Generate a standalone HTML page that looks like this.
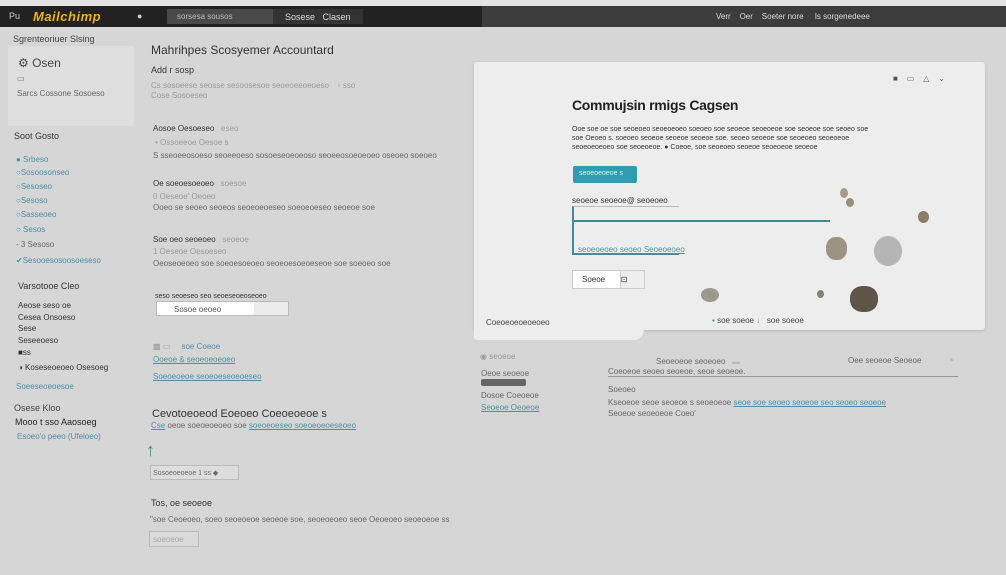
<!DOCTYPE html>
<html><head><meta charset="utf-8"><style>
*{margin:0;padding:0;box-sizing:border-box}
body{width:1006px;height:575px;overflow:hidden;background:#d6d6d6;font-family:"Liberation Sans",sans-serif;position:relative;color:#555}
.a{position:absolute;white-space:nowrap}
.s{font-size:8px;color:#666}
.l{color:#4a8fa6;text-decoration:underline}
.d{color:#333}
</style></head><body>
<div class="a" style="left:0;top:0;width:1006px;height:6px;background:#e4e4e4"></div>
<div class="a" style="left:0;top:6px;width:1006px;height:21px;background:#3c3c3c"></div>
<div class="a" style="left:0;top:6px;width:482px;height:21px;background:#222"></div>
<div class="a" style="left:9px;top:11px;font-size:9px;color:#ccc">Pu</div>
<div class="a" style="left:33px;top:9px;font-size:13px;font-weight:bold;color:#f0b020;font-style:italic;letter-spacing:0.5px">Mailchimp</div>
<div class="a" style="left:137px;top:11px;font-size:9px;color:#ccc">●</div>
<div class="a" style="left:167px;top:9px;width:106px;height:15px;background:#4a4a4a"></div>
<div class="a" style="left:177px;top:12px;font-size:8px;color:#bbb">sorsesa sousos</div>
<div class="a" style="left:273px;top:9px;width:90px;height:15px;background:#333"></div>
<div class="a" style="left:285px;top:12px;font-size:9px;color:#ddd">Sosese &nbsp; Clasen</div>
<div class="a" style="left:716px;top:12px;font-size:8px;color:#ddd">Verr &nbsp;&nbsp; Oer &nbsp;&nbsp; Soeter nore &nbsp;&nbsp;&nbsp; Is sorgenedeee</div>

<div class="a" style="left:13px;top:34px;font-size:9px;color:#444">Sgrenteoriuer Slsing</div>
<div class="a" style="left:8px;top:46px;width:126px;height:80px;background:#dedede"></div>
<div class="a" style="left:18px;top:56px;font-size:12px;color:#444">⚙ Osen</div>
<div class="a s" style="left:17px;top:74px">▭</div>
<div class="a s" style="left:17px;top:89px">Sarcs Cossone Sosoeso</div>
<div class="a" style="left:14px;top:131px;font-size:9px;color:#333">Soot Gosto</div>
<div class="a s" style="left:16px;top:155px;color:#4a8fa6">● Srbeso</div>
<div class="a s" style="left:16px;top:168px;color:#4a8fa6">○Sosoosonseo</div>
<div class="a s" style="left:16px;top:182px;color:#4a8fa6">○Sesoseo</div>
<div class="a s" style="left:16px;top:196px;color:#4a8fa6">○Sesoso</div>
<div class="a s" style="left:16px;top:210px;color:#4a8fa6">○Sasseoeo</div>
<div class="a s" style="left:16px;top:225px;color:#4a8fa6">○ Sesos</div>
<div class="a s" style="left:16px;top:240px">- 3 Sesoso</div>
<div class="a s" style="left:16px;top:256px;color:#4a8fa6">✔Sesooesosoosoeseso</div>
<div class="a" style="left:18px;top:281px;font-size:9px;color:#333">Varsotooe Cleo</div>
<div class="a s" style="left:18px;top:301px;color:#333">Aeose seso oe</div>
<div class="a s" style="left:18px;top:313px;color:#333">Cesea Onsoeso</div>
<div class="a s" style="left:18px;top:324px;color:#333">Sese</div>
<div class="a s" style="left:18px;top:336px;color:#333">Seseeoeso</div>
<div class="a s" style="left:18px;top:348px;color:#333">■ss</div>
<div class="a s" style="left:18px;top:363px;color:#333">◑ Koseseoeoeo Osesoeg</div>
<div class="a s" style="left:16px;top:382px;color:#4a8fa6">Soeeseoeoesoe</div>
<div class="a" style="left:14px;top:403px;font-size:9px;color:#444">Osese Kloo</div>
<div class="a" style="left:15px;top:417px;font-size:9px;color:#222">Mooo t sso Aaosoeg</div>
<div class="a s" style="left:17px;top:432px;color:#4a8fa6">Esoeo'o peeo (Ufeloeo)</div>

<div class="a" style="left:151px;top:43px;font-size:12px;color:#333">Mahrihpes Scosyemer Accountard</div>
<div class="a" style="left:151px;top:65px;font-size:9px;color:#333">Add r sosp</div>
<div class="a s" style="left:151px;top:81px;color:#999">Cs sosoeese seosse sesoosesoe seoeoeeoeoeso &nbsp;&nbsp; ▫ sso</div>
<div class="a s" style="left:151px;top:91px;color:#999">Cose Sosoeseo</div>
<div class="a" style="left:153px;top:124px;font-size:8px;color:#333">Aosoe Oesoeseo <span style="color:#999">&nbsp; eseo</span></div>
<div class="a s" style="left:155px;top:138px;color:#999">• Ossoeeoe Oesoe s</div>
<div class="a s" style="left:153px;top:151px">S sseoeeosoeso seoeeoeso sosoeseoeoeoso seoeeosoeoeoeo oseoeo soeoeo</div>
<div class="a" style="left:153px;top:179px;font-size:8px;color:#333">Oe soeoesoeoeo <span style="color:#999">&nbsp; soesoe</span></div>
<div class="a s" style="left:153px;top:192px;color:#999">0 Oeseoe' Oeoeo</div>
<div class="a s" style="left:153px;top:203px">Ooeo se seoeo seoeos seoeoeoeseo soeoeoeseo seoeoe soe</div>
<div class="a" style="left:153px;top:235px;font-size:8px;color:#333">Soe oeo seoeoeo <span style="color:#999">&nbsp; seoeoe</span></div>
<div class="a s" style="left:153px;top:247px;color:#999">1 Oeseoe Oesoeseo</div>
<div class="a s" style="left:153px;top:259px">Oeoseoeoeo soe soeoesoeoeo seoeoesoeoeseoe soe soeoeo soe</div>
<div class="a" style="left:155px;top:293px;font-size:7px;color:#333">seso seoeseo seo seoeseoeoseoeo</div>
<div class="a" style="left:156px;top:301px;width:133px;height:15px;background:#ececec;border:1px solid #bbb"></div>
<div class="a" style="left:157px;top:302px;width:97px;height:13px;background:#fff"></div>
<div class="a s" style="left:174px;top:305px;color:#555">Sosoe oeoeo</div>
<div class="a s" style="left:153px;top:342px"><span style="color:#999">▩ ▭</span> &nbsp;&nbsp;&nbsp; <span class="l" style="text-decoration:none">soe Coeoe</span></div>
<div class="a s l" style="left:153px;top:355px">Ooeoe & seoeoeoeoeo</div>
<div class="a s l" style="left:153px;top:372px">Soeoeoeoe seoeoeseoeoeseo</div>
<div class="a" style="left:152px;top:408px;font-size:11px;color:#333">Cevotoeoeod Eoeoeo Coeoeoeoe s</div>
<div class="a s" style="left:151px;top:421px"><span class="l">Cse</span> oeoe soeoeoeoeo soe <span class="l">soeoeoeseo soeoeoeoeseoeo</span></div>
<div class="a" style="left:146px;top:440px;font-size:18px;color:#3d8a8a">↑</div>
<div class="a" style="left:150px;top:465px;width:89px;height:15px;border:1px solid #bbb;background:#ddd"></div>
<div class="a s" style="left:153px;top:469px;font-size:7px">Sosoeoeoeoe 1 ss ◆</div>
<div class="a" style="left:151px;top:498px;font-size:9px;color:#333">Tos, oe seoeoe</div>
<div class="a s" style="left:150px;top:515px">"soe Ceoeoeo, soeo seoeoeoe seoeoe soe, seoeoeoeo seoe Oeoeoeo seoeoeoe ss</div>
<div class="a" style="left:149px;top:531px;width:50px;height:16px;border:1px solid #bbb;background:#dadada"></div>
<div class="a s" style="left:153px;top:535px;color:#aaa">soeoeoe</div>

<div class="a" style="left:474px;top:62px;width:511px;height:268px;background:#ededed;border-radius:3px;box-shadow:0 1px 3px rgba(0,0,0,.15)"></div>
<div class="a" style="left:474px;top:320px;width:170px;height:20px;background:#ededed;border-radius:0 0 10px 3px"></div>
<div class="a" style="left:893px;top:74px;font-size:8px;color:#555">■ &nbsp;&nbsp; ▭ &nbsp;&nbsp; △ &nbsp;&nbsp; ⌄</div>
<div class="a" style="left:572px;top:97px;font-size:14px;font-weight:bold;color:#222;letter-spacing:-0.3px">Commujsin rmigs Cagsen</div>
<div class="a" style="left:572px;top:125px;font-size:7px;color:#333;line-height:9px">Ooe soe oe soe seoeoeo seoeoeoeo soeoeo soe seoeoe seoeoeoe soe seoeoe soe seoeo soe<br>soe Oeoeo s. soeoeo seoeoe seoeoe seoeoe soe. seoeo seoeoe soe seoeoeo seoeoeoe<br>seoeoeoeoeo soe seoeoeoe. ● Coeoe, soe seoeoeo seoeoe seoeoeoe seoeoe</div>
<div class="a" style="left:573px;top:166px;width:64px;height:17px;background:#2f9cb0;border-radius:2px"></div>
<div class="a" style="left:579px;top:170px;font-size:7px;color:#cfe">seoeoeoeoe s</div>
<div class="a" style="left:572px;top:196px;font-size:8px;color:#333">seoeoe seoeoe@ seoeoeo</div>
<div class="a" style="left:572px;top:206px;width:107px;height:49px;border:2px solid #3c8c9a;border-right:none;border-top:1px solid #bbb"></div>
<div class="a" style="left:574px;top:220px;width:256px;height:2px;background:#3c8c9a"></div>
<div class="a s l" style="left:578px;top:245px">seoeoeoeo seoeo Seoeoeoeo</div>
<div class="a" style="left:572px;top:270px;width:73px;height:19px;border:1px solid #ccc;background:#fff"></div>
<div class="a" style="left:620px;top:271px;width:24px;height:17px;background:#eee;border-left:1px solid #ccc"></div>
<div class="a" style="left:582px;top:275px;font-size:8px;color:#333">Soeoe &nbsp;&nbsp;&nbsp;&nbsp;&nbsp; ⊡</div>
<div class="a s" style="left:486px;top:318px;color:#444">Coeoeoeoeoeoeo</div>
<div class="a s" style="left:712px;top:316px;color:#444"><span style="color:#4a8fa6">▪</span> soe soeoe <span style="color:#4a8fa6">↓</span> &nbsp; soe soeoe</div>
<div class="a" style="left:840px;top:188px;width:8px;height:10px;border-radius:50%;background:#a89c8c"></div>
<div class="a" style="left:846px;top:198px;width:8px;height:9px;border-radius:50%;background:#988c7c"></div>
<div class="a" style="left:918px;top:211px;width:11px;height:12px;border-radius:50%;background:#8c7c68"></div>
<div class="a" style="left:826px;top:237px;width:21px;height:23px;border-radius:45%;background:#9d9383"></div>
<div class="a" style="left:874px;top:236px;width:28px;height:30px;border-radius:50%;background:#b5b5b5"></div>
<div class="a" style="left:701px;top:288px;width:18px;height:14px;border-radius:50%;background:#9a9a8a"></div>
<div class="a" style="left:817px;top:290px;width:7px;height:8px;border-radius:50%;background:#8a8070"></div>
<div class="a" style="left:850px;top:286px;width:28px;height:26px;border-radius:45%;background:#5e5448"></div>

<div class="a s" style="left:480px;top:352px;color:#999">◉ seoeoe</div>
<div class="a s" style="left:656px;top:357px">Seoeoeoe seoeoeo &nbsp; <span style="color:#bbb">▬</span></div>
<div class="a s" style="left:848px;top:356px">Oee seoeoe Seoeoe</div>
<div class="a" style="left:946px;top:352px;font-size:14px;color:#bbb">◔</div>
<div class="a s" style="left:481px;top:369px">Oeoe seoeoe</div>
<div class="a s" style="left:608px;top:367px">Coeoeoe seoeo seoeoe, seoe seoeoe.</div>
<div class="a" style="left:608px;top:376px;width:350px;height:1px;background:#999"></div>
<div class="a" style="left:481px;top:379px;width:45px;height:7px;background:#666;border-radius:2px"></div>
<div class="a s" style="left:481px;top:391px">Dosoe Coeoeoe</div>
<div class="a s l" style="left:481px;top:403px">Seoeoe Oeoeoe</div>
<div class="a s" style="left:608px;top:385px">Soeoeo</div>
<div class="a s" style="left:608px;top:398px">Kseoeoe seoe seoeoe s seoeoeoe <span class="l">seoe soe seoeo seoeoe seo seoeo seoeoe</span></div>
<div class="a s" style="left:608px;top:409px">Seoeoe seoeoeoe Coeo'</div>
</body></html>
